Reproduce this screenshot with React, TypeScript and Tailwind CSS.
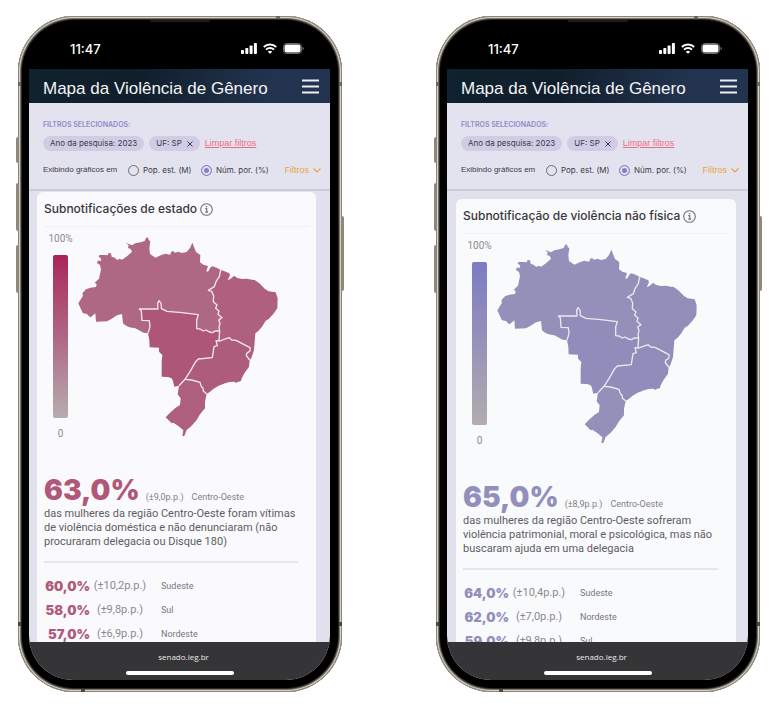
type Row = { value: string; margin: string; region: string };

type Theme = {
  text: string;
  bar: string;
  card: string;
  offset: string;
  north: string;
  northeast: string;
  midwest: string;
  southeast: string;
  south: string;
};

type Screen = {
  id: string;
  title: string;
  value: string;
  margin: string;
  region: string;
  description: string;
  rows: Row[];
  theme: Theme;
};

const screens: Screen[] = [
  {
    id: "estado",
    title: "Subnotificações de estado",
    value: "63,0%",
    margin: "(±9,0p.p.)",
    region: "Centro-Oeste",
    description:
      "das mulheres da região Centro-Oeste foram vítimas de violência doméstica e não denunciaram (não procuraram delegacia ou Disque 180)",
    rows: [
      { value: "60,0%", margin: "(±10,2p.p.)", region: "Sudeste" },
      { value: "58,0%", margin: "(±9,8p.p.)", region: "Sul" },
      { value: "57,0%", margin: "(±6,9p.p.)", region: "Nordeste" },
    ],
    theme: {
      text: "text-[#b15879]",
      bar: "from-[#a9205a] via-[#ae6685] to-[#b5adae]",
      card: "bg-[#fafafd]",
      offset: "pt-px pr-[14px] pl-2",
      north: "#ae6883",
      northeast: "#af607f",
      midwest: "#ae5677",
      southeast: "#ad5c7b",
      south: "#ae5f7d",
    },
  },
  {
    id: "violencia",
    title: "Subnotificação de violência não física",
    value: "65,0%",
    margin: "(±8,9p.p.)",
    region: "Centro-Oeste",
    description:
      "das mulheres da região Centro-Oeste sofreram violência patrimonial, moral e psicológica, mas não buscaram ajuda em uma delegacia",
    rows: [
      { value: "64,0%", margin: "(±10,4p.p.)", region: "Sudeste" },
      { value: "62,0%", margin: "(±7,0p.p.)", region: "Nordeste" },
      { value: "59,0%", margin: "(±9,8p.p.)", region: "Sul" },
    ],
    theme: {
      text: "text-[#928fbd]",
      bar: "from-[#7d7bc3] via-[#9792b9] to-[#b3acad]",
      card: "bg-[#f9fafc]",
      offset: "pt-2 pr-3 pl-[9px]",
      north: "#9490b9",
      northeast: "#918eba",
      midwest: "#908dbb",
      southeast: "#908dbb",
      south: "#9490b9",
    },
  },
];

const NORTH =
  "M19 220L33 197L31 190L42 178L55 173L72 171L74 163L68 158L81 146L84 132L87 118L84 105L75 99L77 92L88 92L86 84L80 80L82 75L97 75L107 76L110 69L117 70L119 80L128 83L136 90L143 86L150 89L165 79L180 65L176 57L168 54L170 46L161 38L180 46L190 40L206 37L218 33L222 24L228 22L230 30L235 34L232 55L234 72L240 76L250 83L268 75L280 71L295 74L297 66L303 63L309 68L320 65L329 69L344 66L354 54L361 38L372 66L385 75L384 97L394 104L408 108L403 124L408 125L416 112L421 109L434 113L446 120L442 140L432 155L427 170L409 181L419 184L425 198L424 215L435 225L431 235L441 243L438 253L450 263L440 270L444 280L441 292L443 303L429 303L422 308L412 306L402 300L394 303L384 297L374 296L374 270L379 254L330 248L285 244L268 236L267 220L261 212L257 220L258 237L202 237L208 242L210 271L232 272L234 290L228 310L215 308L190 295L172 292L160 286L153 280L150 252L135 256L118 267L105 274L72 275L70 250L56 262L50 258L45 252L33 250L28 240Z";
const NORTHEAST =
  "M446 120L456 123L472 130L474 136L467 151L474 148L487 137L494 143L509 147L525 146L539 149L548 150L562 160L579 177L590 184L611 187L617 205L616 235L604 252L590 267L581 272L570 290L559 303L550 310L548 335L546 360L539 382L535 389L523 377L524 370L534 363L534 353L492 331L479 330L472 323L454 329L444 333L441 330L443 303L441 292L444 280L440 270L450 263L438 253L441 243L431 235L435 225L424 215L425 198L419 184L409 181L427 170L432 155L442 140Z";
const MIDWEST =
  "M228 310L234 290L232 272L210 271L208 242L202 237L258 237L257 220L261 212L267 220L268 236L285 244L330 248L379 254L374 270L374 296L384 297L394 303L402 300L412 306L422 308L429 303L443 303L441 330L444 333L432 332L436 347L426 350L421 383L379 387L371 395L354 425L339 448L321 467L307 470L302 450L299 445L288 441L269 440L269 395L271 375L261 365L261 353L233 352L232 330Z";
const SOUTHEAST =
  "M339 448L354 425L371 395L379 387L421 383L426 350L436 347L432 332L444 333L454 329L472 323L479 330L492 331L534 353L534 363L524 370L523 377L533 390L531 410L517 430L509 445L507 453L495 457L491 460L489 455L473 456L459 460L440 467L425 476L414 485L404 492L394 483L393 474L388 470L384 457L359 450Z";
const SOUTH =
  "M339 448L359 450L384 457L388 470L393 474L394 483L404 492L399 515L399 535L384 553L374 570L359 587L344 600L337 618L331 618L334 601L319 588L304 578L299 580L281 562L294 548L310 534L324 525L326 505L317 493L321 467Z";

function BrazilMap({ theme, label }: { theme: Theme; label: string }) {
  return (
    <svg
      viewBox="15 15 609 609"
      role="img"
      aria-label={label}
      className="mt-2 size-[203px] shrink-0"
      stroke="#efe6ee"
      strokeWidth="4"
      strokeLinejoin="round"
    >
      <g stroke="none">
        <path d={NORTH} fill={theme.north} />
        <path d={NORTHEAST} fill={theme.northeast} />
        <path d={MIDWEST} fill={theme.midwest} />
        <path d={SOUTHEAST} fill={theme.southeast} />
        <path d={SOUTH} fill={theme.south} />
      </g>
      <g fill="none">
        <path d="M446 120L442 140L432 155L427 170L409 181L419 184L425 198L424 215L435 225L431 235L441 243L438 253L450 263L440 270L444 280L441 292L443 303L441 330L444 333" />
        <path d="M228 310L234 290L232 272L210 271L208 242L202 237L258 237L257 220L261 212L267 220L268 236L285 244L330 248L379 254L374 270L374 296L384 297L394 303L402 300L412 306L422 308L429 303L443 303" />
        <path d="M321 467L339 448L354 425L371 395L379 387L421 383L426 350L436 347L432 332L444 333L454 329L472 323L479 330L492 331L534 353L534 363L524 370L523 377L533 390" />
        <path d="M339 448L359 450L384 457L388 470L393 474L394 483L404 492" />
      </g>
    </svg>
  );
}

function StatusBar() {
  return (
    <div className="flex h-[53px] items-center justify-between pt-3 pr-[26px] pl-[41px] text-white">
      <span className="font-['Inter',sans-serif] text-[13px] leading-4 font-medium">11:47</span>
      <span className="flex items-center gap-[6px]">
        <svg viewBox="0 0 16 11" className="h-[11px] w-4" fill="currentColor" aria-hidden="true">
          <rect x="0" y="7" width="3" height="4" rx="0.8" />
          <rect x="4.3" y="5" width="3" height="6" rx="0.8" />
          <rect x="8.6" y="2.5" width="3" height="8.5" rx="0.8" />
          <rect x="12.9" y="0" width="3" height="11" rx="0.8" />
        </svg>
        <svg viewBox="0 0 14 11" className="h-[11px] w-[14px]" fill="none" stroke="currentColor" strokeWidth="2" aria-hidden="true">
          <path d="M0.8 4A8.8 8.8 0 0 1 13.2 4" />
          <path d="M3 6.6A5.8 5.8 0 0 1 11 6.6" />
          <path d="M7 10.8L4.8 8.7A3.2 3.2 0 0 1 9.2 8.7Z" fill="currentColor" stroke="none" />
        </svg>
        <svg viewBox="0 0 21 11" className="h-[11px] w-[21px]" aria-hidden="true">
          <rect x="0.5" y="0.5" width="18" height="10" rx="3" fill="none" stroke="#6b6b6b" />
          <rect x="1.5" y="1.5" width="16" height="8" rx="2" fill="currentColor" />
          <path d="M19.6 3.8V7.2Q20.8 6.6 20.8 5.5T19.6 3.8Z" fill="#7b7b7b" />
        </svg>
      </span>
    </div>
  );
}

function Filters({ id }: { id: string }) {
  const radio =
    "size-[11px] shrink-0 appearance-none rounded-full border border-[#6c6b72] checked:border-[#8480c4] checked:bg-[#8480c4] checked:shadow-[inset_0_0_0_2px_#e3e3ef]";
  return (
    <section className="h-22 shrink-0 border-b-2 border-[#cbcad8] bg-[#e3e3ef] pt-[17px] pr-[9px] pl-[14px] font-['Inter',sans-serif] text-[#3c3b42]">
      <h2 className="text-[7px] leading-[10px] font-semibold text-[#8f89c8]">FILTROS SELECIONADOS:</h2>
      <div className="mt-[6px] flex items-center gap-[5px] text-[8px] leading-[15px] whitespace-nowrap">
        <span className="rounded-full bg-[#d0cce5] px-[7px]">Ano da pesquisa: 2023</span>
        <span className="flex items-center gap-[5px] rounded-full bg-[#d0cce5] px-[7px]">
          UF: SP
          <button type="button" aria-label="Remover filtro UF: SP" className="flex h-[15px] items-center">
            <svg viewBox="0 0 6 6" className="size-[6px]" stroke="currentColor" aria-hidden="true">
              <path d="M0.5 0.5L5.5 5.5M5.5 0.5L0.5 5.5" />
            </svg>
          </button>
        </span>
        <a href="#limpar" className="font-['Liberation_Sans',Arial,sans-serif] text-[9px] text-[#ee6f7c] underline">
          Limpar filtros
        </a>
      </div>
      <div className="mt-3 flex items-center text-[8px] leading-[14px] whitespace-nowrap">
        <span className="w-[85px] font-['Liberation_Sans',Arial,sans-serif]">Exibindo gráficos em</span>
        <label className="flex w-[73px] items-center gap-1">
          <input type="radio" name={`modo-${id}`} className={radio} />
          Pop. est. (M)
        </label>
        <label className="flex items-center gap-1">
          <input type="radio" name={`modo-${id}`} defaultChecked className={radio} />
          Núm. por. (%)
        </label>
        <button
          type="button"
          className="ml-auto flex items-center gap-1 font-['Liberation_Sans',Arial,sans-serif] text-[9px] text-[#eda13c]"
        >
          Filtros
          <svg viewBox="0 0 8 5" className="h-[5px] w-2" fill="none" stroke="currentColor" strokeWidth="1.2" aria-hidden="true">
            <path d="M0.5 0.5L4 4L7.5 0.5" />
          </svg>
        </button>
      </div>
    </section>
  );
}

function Card({ screen }: { screen: Screen }) {
  const { theme } = screen;
  return (
    <article className={`rounded-t-md px-[7px] font-['Roboto',sans-serif] ${theme.card}`}>
      <header className="flex h-[35px] items-center gap-[3px] border-b border-[#f0f0f4] font-['Inter',sans-serif]">
        <h2 className="text-xs leading-4 font-medium whitespace-nowrap text-[#37363b]">{screen.title}</h2>
        <button type="button" aria-label="Informações" className="text-[#6f6f74]">
          <svg viewBox="0 0 13 13" className="size-[13px]" fill="none" stroke="currentColor" aria-hidden="true">
            <circle cx="6.5" cy="6.5" r="5.8" strokeWidth="1.1" />
            <path d="M5.3 5.7H6.7V9M5.2 9.2H8" strokeWidth="1.2" />
            <circle cx="6.5" cy="3.7" r="0.8" fill="currentColor" stroke="none" />
          </svg>
        </button>
      </header>
      <div className="flex h-[213px]">
        <div className="flex w-[33px] shrink-0 flex-col items-center pt-[6px] text-[10px] leading-3 text-[#8c8b90]">
          <span>100%</span>
          <div className={`my-[10px] h-[163px] w-[15px] rounded-xs bg-linear-to-b ${theme.bar}`} />
          <span>0</span>
        </div>
        <BrazilMap theme={theme} label={screen.title} />
      </div>
      <div className="mt-9 flex items-baseline text-[9px] text-[#828186]">
        <strong className={`font-['Inter',sans-serif] text-[28px] leading-7 font-black ${theme.text}`}>{screen.value}</strong>
        <span className="ml-[6px]">{screen.margin}</span>
        <span className="ml-2">{screen.region}</span>
      </div>
      <p className="mt-[2px] w-[256px] text-[11px] leading-[14px] text-[#5d5c61]">{screen.description}</p>
      <hr className="mt-3 mr-[11px] border-t-2 border-[#e3e7ea]" />
      <table className="mt-[11px] w-[200px] table-fixed border-collapse">
        <tbody>
          {screen.rows.map((row) => (
            <tr key={row.region} className="h-6">
              <th scope="row" className={`w-[46px] p-0 text-right font-['Inter',sans-serif] text-[13px] leading-4 font-black ${theme.text}`}>
                {row.value}
              </th>
              <td className="w-[60px] p-0 text-center text-[11px] leading-4 text-[#8a898e]">{row.margin}</td>
              <td className="p-0 pl-[11px] text-[9px] leading-4 text-[#77767b]">{row.region}</td>
            </tr>
          ))}
        </tbody>
      </table>
    </article>
  );
}

function Phone({ screen }: { screen: Screen }) {
  return (
    <section className="relative w-[324px] shrink-0">
      <i className="absolute top-[121px] -left-[2px] h-[26px] w-[3px] rounded-l-xs bg-[#8e897b]" />
      <i className="absolute top-[167px] -left-[2px] h-12 w-[3px] rounded-l-xs bg-[#8e897b]" />
      <i className="absolute top-[229px] -left-[2px] h-12 w-[3px] rounded-l-xs bg-[#8e897b]" />
      <i className="absolute top-[200px] -right-[2px] h-[75px] w-[3px] rounded-r-xs bg-[#8e897b]" />
      <div className="relative rounded-[56px] bg-black pr-3 pb-3 pl-[11px] shadow-[inset_0_0_0_1px_#8a8578,inset_0_0_0_2px_#d8d3c5,inset_0_0_0_3px_#77726a,inset_0_0_0_4px_#2b2a28]">
        <i className="absolute top-1 left-[132px] h-[2px] w-[60px] rounded-full bg-[#1d1d1d]" />
        <i className="absolute top-0 left-[258px] h-[3px] w-1 bg-[#6c685f]" />
        <i className="absolute bottom-0 left-[63px] h-[3px] w-1 bg-[#4c4943]" />
        <i className="absolute top-[66px] left-0 h-1 w-[3px] bg-[#6c685f]" />
        <i className="absolute top-[66px] right-0 h-1 w-[3px] bg-[#6c685f]" />
        <i className="absolute bottom-[66px] left-0 h-1 w-[3px] bg-[#4c4943]" />
        <i className="absolute right-0 bottom-[66px] h-1 w-[3px] bg-[#4c4943]" />
        <StatusBar />
        <div className="flex h-[611px] flex-col overflow-hidden rounded-b-[44px] bg-[#e0e1ed]">
          <header className="flex h-[34px] shrink-0 items-center justify-between bg-linear-to-r from-[#10222f] via-[#101e2b] via-35% to-[#22334f] to-80% pt-[6px] pr-[11px] pl-[14px]">
            <h1 className="text-[17px] leading-6 whitespace-nowrap text-[#f3f4f6]">Mapa da Violência de Gênero</h1>
            <button type="button" aria-label="Menu" className="pb-[6px] text-[#eceef1]">
              <svg viewBox="0 0 17 15" className="h-[15px] w-[17px]" stroke="currentColor" strokeWidth="1.8" aria-hidden="true">
                <path d="M0 1.5H17M0 7.5H17M0 13.5H17" />
              </svg>
            </button>
          </header>
          <Filters id={screen.id} />
          <main className={`min-h-0 flex-1 overflow-hidden ${screen.theme.offset}`}>
            <Card screen={screen} />
          </main>
          <footer className="flex h-[38px] shrink-0 flex-col items-center justify-between bg-[#353537] pt-2 pb-[5px]">
            <a href="#senado" className="pl-2 font-['Open_Sans',sans-serif] text-[8px] leading-[14px] text-[#e9e9ea]">
              senado.leg.br
            </a>
            <span className="h-1 w-[108px] rounded-full bg-white" />
          </footer>
        </div>
      </div>
    </section>
  );
}

export default function App() {
  return (
    <div className="flex min-h-screen flex-wrap items-start justify-between gap-y-8 bg-white py-4 pr-[17px] pl-[18px] font-['Liberation_Sans',Arial,sans-serif]">
      {screens.map((screen) => (
        <Phone key={screen.id} screen={screen} />
      ))}
    </div>
  );
}
